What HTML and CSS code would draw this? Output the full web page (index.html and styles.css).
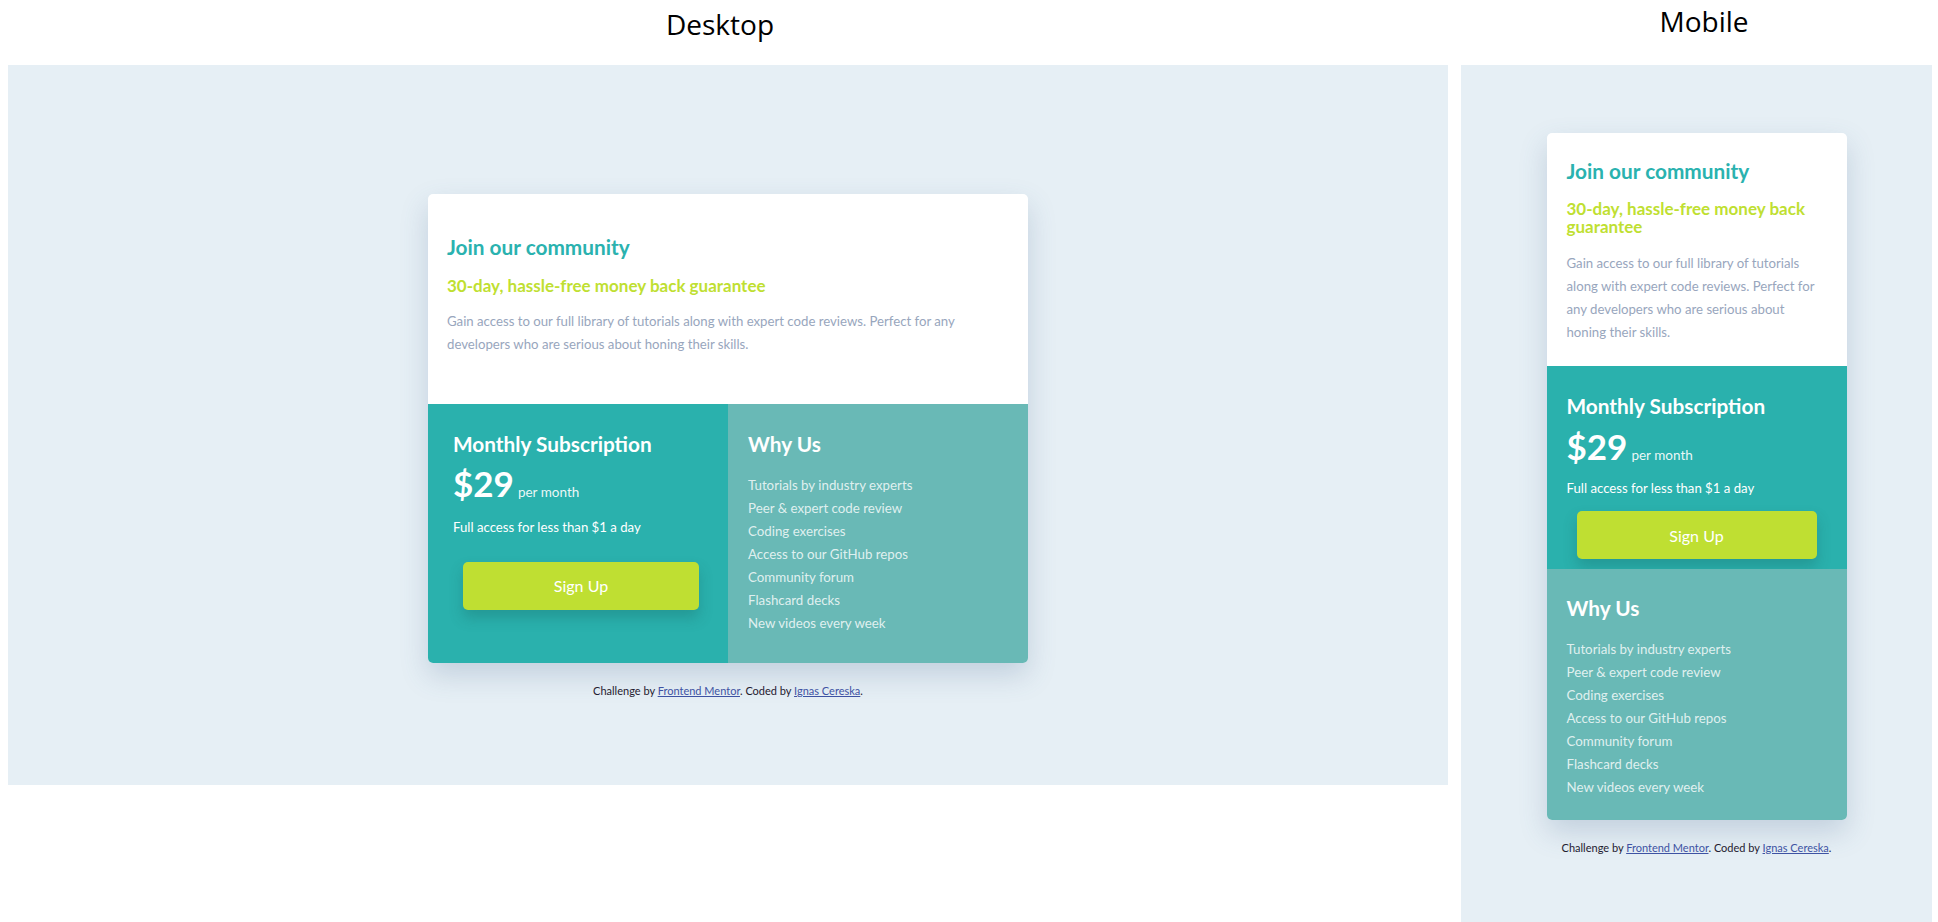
FILE: index.html
```html
<!DOCTYPE html>
<html lang="en">
<head>
<meta charset="utf-8">
<title>Single price grid component</title>
<link rel="stylesheet" href="styles.css">
</head>
<body>
<div class="page">
  <section class="frame frame-desktop">
    <h2 class="frame-title title-desktop">Desktop</h2>
    <div class="screen screen-desktop">
      <article class="card card-desktop">
        <div class="card-top">
          <h1 class="card-title">Join our community</h1>
          <h2 class="card-guarantee">30-day, hassle-free money back guarantee</h2>
          <p class="card-text">Gain access to our full library of tutorials along with expert code reviews. Perfect for any developers who are serious about honing their skills.</p>
        </div>
        <div class="card-bottom">
          <div class="sub">
            <h3 class="col-title">Monthly Subscription</h3>
            <div class="price"><span class="price-amount">$29</span><span class="price-period">per month</span></div>
            <p class="sub-note">Full access for less than $1 a day</p>
            <a class="signup" href="#">Sign Up</a>
          </div>
          <div class="why">
            <h3 class="col-title">Why Us</h3>
            <ul class="why-list">
              <li>Tutorials by industry experts</li>
              <li>Peer &amp; expert code review</li>
              <li>Coding exercises</li>
              <li>Access to our GitHub repos</li>
              <li>Community forum</li>
              <li>Flashcard decks</li>
              <li>New videos every week</li>
            </ul>
          </div>
        </div>
      </article>
      <p class="attribution">Challenge by <a href="#">Frontend Mentor</a>. Coded by <a href="#">Ignas Cereska</a>.</p>
    </div>
  </section>
  <section class="frame frame-mobile">
    <h2 class="frame-title title-mobile">Mobile</h2>
    <div class="screen screen-mobile">
      <article class="card card-mobile">
        <div class="card-top">
          <h1 class="card-title">Join our community</h1>
          <h2 class="card-guarantee">30-day, hassle-free money back guarantee</h2>
          <p class="card-text">Gain access to our full library of tutorials along with expert code reviews. Perfect for any developers who are serious about honing their skills.</p>
        </div>
        <div class="card-bottom">
          <div class="sub">
            <h3 class="col-title">Monthly Subscription</h3>
            <div class="price"><span class="price-amount">$29</span><span class="price-period">per month</span></div>
            <p class="sub-note">Full access for less than $1 a day</p>
            <a class="signup" href="#">Sign Up</a>
          </div>
          <div class="why">
            <h3 class="col-title">Why Us</h3>
            <ul class="why-list">
              <li>Tutorials by industry experts</li>
              <li>Peer &amp; expert code review</li>
              <li>Coding exercises</li>
              <li>Access to our GitHub repos</li>
              <li>Community forum</li>
              <li>Flashcard decks</li>
              <li>New videos every week</li>
            </ul>
          </div>
        </div>
      </article>
      <p class="attribution">Challenge by <a href="#">Frontend Mentor</a>. Coded by <a href="#">Ignas Cereska</a>.</p>
    </div>
  </section>
</div>
</body>
</html>
```

FILE: styles.css
```css
* { box-sizing: border-box; }

html, body {
  margin: 0;
  padding: 0;
  background: #ffffff;
  overflow: hidden;
}

body {
  font-family: Lato, "Liberation Sans", sans-serif;
}

.page {
  display: flex;
  gap: 13px;
  padding-left: 8px;
}

.frame-desktop { width: 1440px; }
.frame-mobile { width: 471px; }

.frame-title {
  margin: 0;
  height: 65px;
  font-family: "Open Sans", "Liberation Sans", sans-serif;
  font-weight: 400;
  font-size: 28px;
  line-height: 36px;
  color: #000;
  text-align: center;
}

.title-desktop { padding-top: 6px; padding-right: 16px; }
.title-mobile { padding-top: 3px; padding-left: 15px; }

.screen {
  background: #e6eff5;
  display: flex;
  flex-direction: column;
  align-items: center;
}

.screen-desktop { height: 720px; padding-top: 129px; }
.screen-mobile { height: 857px; padding-top: 68px; }

.card {
  background: #fff;
  border-radius: 5px;
  overflow: hidden;
  box-shadow: 0 12px 28px rgba(70, 100, 140, 0.22);
}

.card-desktop { width: 600px; }
.card-mobile { width: 300px; }

.card-title {
  margin: 0;
  font-size: 20.8px;
  line-height: 24px;
  font-weight: 700;
  color: #2ab2af;
}

.card-guarantee {
  margin: 17px 0 0;
  font-size: 17px;
  line-height: 20px;
  font-weight: 700;
  color: #bfdf32;
}

.card-text {
  margin: 14px 0 0;
  font-size: 13.2px;
  line-height: 23px;
  color: #98a6bd;
}

.card-desktop .card-top { padding: 41px 40px 48px 19px; }
.card-mobile .card-top { padding: 26px 25px 22px 20px; }
.card-mobile .card-guarantee { line-height: 18px; margin-top: 17px; }
.card-mobile .card-text { margin-top: 16px; }

.card-bottom { display: grid; }
.card-desktop .card-bottom { grid-template-columns: 300px 300px; }
.card-mobile .card-bottom { grid-template-columns: 300px; }

.sub { background: #2ab1ad; color: #fff; }
.why { background: #69b9b6; color: #fff; }

.card-desktop .sub { padding: 27.5px 20px 53px 25px; }
.card-desktop .why { padding: 27.5px 20px 27px 20px; }
.card-mobile .sub { padding: 27.5px 20px 10px 20px; }
.card-mobile .why { padding: 26.5px 20px 21.5px 20px; }

.col-title {
  margin: 0;
  font-size: 20.8px;
  line-height: 24px;
  font-weight: 700;
  color: #fff;
}

.price {
  display: flex;
  align-items: baseline;
  gap: 4px;
  margin-top: 10px;
}
.card-desktop .price { margin-top: 9px; }

.price-amount {
  font-size: 35px;
  line-height: 36px;
  font-weight: 700;
}

.price-period {
  font-size: 13.5px;
  line-height: 16px;
  color: rgba(255, 255, 255, 0.92);
}

.sub-note {
  margin: 16px 0 0;
  font-size: 13.2px;
  line-height: 20px;
  color: #fff;
}
.card-mobile .sub-note { margin-top: 14px; }

.signup {
  display: flex;
  align-items: center;
  justify-content: center;
  height: 48px;
  margin: 25px auto 0;
  border-radius: 5px;
  background: #bfdf32;
  color: #fff;
  text-decoration: none;
  font-size: 16px;
  box-shadow: 0 8px 14px rgba(20, 80, 80, 0.25);
}
.card-desktop .signup { width: 236px; margin-left: 10px; }
.card-mobile .signup { width: 240px; margin-top: 13.5px; }

.why-list {
  list-style: none;
  margin: 18px 0 0;
  padding: 0;
  font-size: 13.3px;
  line-height: 23px;
  color: rgba(255, 255, 255, 0.8);
}
.card-mobile .why-list { margin-top: 18.2px; }

.attribution {
  margin: 21.5px 0 0;
  font-size: 11px;
  line-height: 14px;
  color: #1f2030;
  text-align: center;
}
.screen-mobile .attribution { margin-top: 20.5px; }

.attribution a { color: hsl(228, 45%, 44%); }
```
